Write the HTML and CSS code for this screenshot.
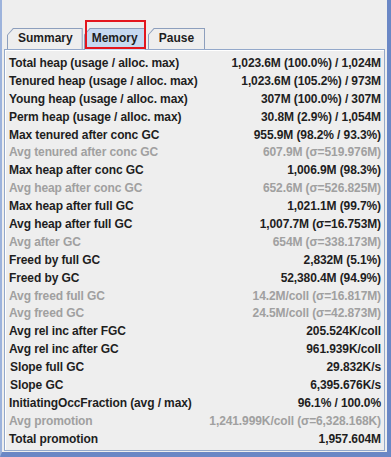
FILE: index.html
```html
<!DOCTYPE html>
<html>
<head>
<meta charset="utf-8">
<link rel="stylesheet" href="styles.css">
</head>
<body>
<div class="window">
  <div class="content">
    <div class="tabs">
      <div class="tab tab-first">
        <div class="tab-face"><span class="tab-label">Summary</span></div>
      </div>
      <div class="tab tab-selected">
        <div class="tab-face"><span class="tab-label">Memory</span></div>
        <div class="highlight"></div>
      </div>
      <div class="tab tab-last">
        <div class="tab-face"><span class="tab-label">Pause</span></div>
      </div>
    </div>
    <div class="panel">
      <div class="row"><span>Total heap (usage / alloc. max)</span><span>1,023.6M (100.0%) / 1,024M</span></div>
      <div class="row"><span>Tenured heap (usage / alloc. max)</span><span>1,023.6M (105.2%) / 973M</span></div>
      <div class="row"><span>Young heap (usage / alloc. max)</span><span>307M (100.0%) / 307M</span></div>
      <div class="row"><span>Perm heap (usage / alloc. max)</span><span>30.8M (2.9%) / 1,054M</span></div>
      <div class="row"><span>Max tenured after conc GC</span><span>955.9M (98.2% / 93.3%)</span></div>
      <div class="row muted"><span>Avg tenured after conc GC</span><span>607.9M (σ=519.976M)</span></div>
      <div class="row"><span>Max heap after conc GC</span><span>1,006.9M (98.3%)</span></div>
      <div class="row muted"><span>Avg heap after conc GC</span><span>652.6M (σ=526.825M)</span></div>
      <div class="row"><span>Max heap after full GC</span><span>1,021.1M (99.7%)</span></div>
      <div class="row"><span>Avg heap after full GC</span><span>1,007.7M (σ=16.753M)</span></div>
      <div class="row muted"><span>Avg after GC</span><span>654M (σ=338.173M)</span></div>
      <div class="row"><span>Freed by full GC</span><span>2,832M (5.1%)</span></div>
      <div class="row"><span>Freed by GC</span><span>52,380.4M (94.9%)</span></div>
      <div class="row muted"><span>Avg freed full GC</span><span>14.2M/coll (σ=16.817M)</span></div>
      <div class="row muted"><span>Avg freed GC</span><span>24.5M/coll (σ=42.873M)</span></div>
      <div class="row"><span>Avg rel inc after FGC</span><span>205.524K/coll</span></div>
      <div class="row"><span>Avg rel inc after GC</span><span>961.939K/coll</span></div>
      <div class="row indent"><span>Slope full GC</span><span>29.832K/s</span></div>
      <div class="row indent"><span>Slope GC</span><span>6,395.676K/s</span></div>
      <div class="row"><span>InitiatingOccFraction (avg / max)</span><span>96.1% / 100.0%</span></div>
      <div class="row muted"><span>Avg promotion</span><span>1,241.999K/coll (σ=6,328.168K)</span></div>
      <div class="row"><span>Total promotion</span><span>1,957.604M</span></div>
    </div>
  </div>
</div>
</body>
</html>
```

FILE: styles.css
```css
html, body {
  margin: 0;
  padding: 0;
  background: #eeeeee;
}

body {
  font-family: "Liberation Sans", Arial, sans-serif;
  font-size: 12px;
  font-weight: bold;
  color: #1e1e1e;
}

.window {
  box-sizing: border-box;
  width: 391px;
  height: 457px;
  background: #eeeeee;
  border-left: 2px solid #9db3dc;
  border-right: 4px solid #6a87c5;
  border-bottom: 5px solid #6a87c5;
  display: flex;
  flex-direction: column;
}

.content {
  flex: 1;
  display: flex;
  flex-direction: column;
  padding: 28px 0 1px 2px;
}

.tabs {
  display: flex;
  height: 21px;
  padding-left: 3px;
  position: relative;
  z-index: 1;
}

.tab {
  position: relative;
  height: 21px;
}

.tab-face {
  box-sizing: border-box;
  height: 100%;
  background: #8d9fbd;
  padding: 1px 1px 0 1px;
  clip-path: polygon(0 7px, 6px 0, 100% 0, 100% 100%, 0 100%);
}

.tab-label {
  display: block;
  box-sizing: border-box;
  height: 100%;
  line-height: 19px;
  background: #eeeeee;
  padding: 0 9px 0 10px;
  clip-path: polygon(0 6px, 5.5px 0, 100% 0, 100% 100%, 0 100%);
}

.tab-first {
  margin-right: 1px;
}

.tab-selected {
  height: 22px;
}

.tab-selected .tab-label {
  background: #c6d9f1;
  padding: 0 7px 0 7px;
  height: 21px;
}

.tab-last {
  margin-left: 2px;
}

.tab-last .tab-label {
  padding: 0 10px 0 10px;
}

.highlight {
  position: absolute;
  left: 1px;
  top: -8px;
  width: 61px;
  height: 29px;
  box-sizing: border-box;
  border: 2px solid #e3161e;
}

.panel {
  flex: 1;
  border: 1px solid #93a8ca;
  box-shadow: inset 1px 1px 0 #ffffff;
  margin-right: 2px;
  padding: 4px 3px 0 4px;
  display: flex;
  flex-direction: column;
  letter-spacing: -0.1px;
}

.row {
  display: flex;
  justify-content: space-between;
  height: 17.9px;
  line-height: 18px;
  white-space: nowrap;
  color: #1e1e1e;
}

.row.muted {
  color: #a0a0a0;
}

.row.indent span:first-child {
  padding-left: 1px;
}
```
